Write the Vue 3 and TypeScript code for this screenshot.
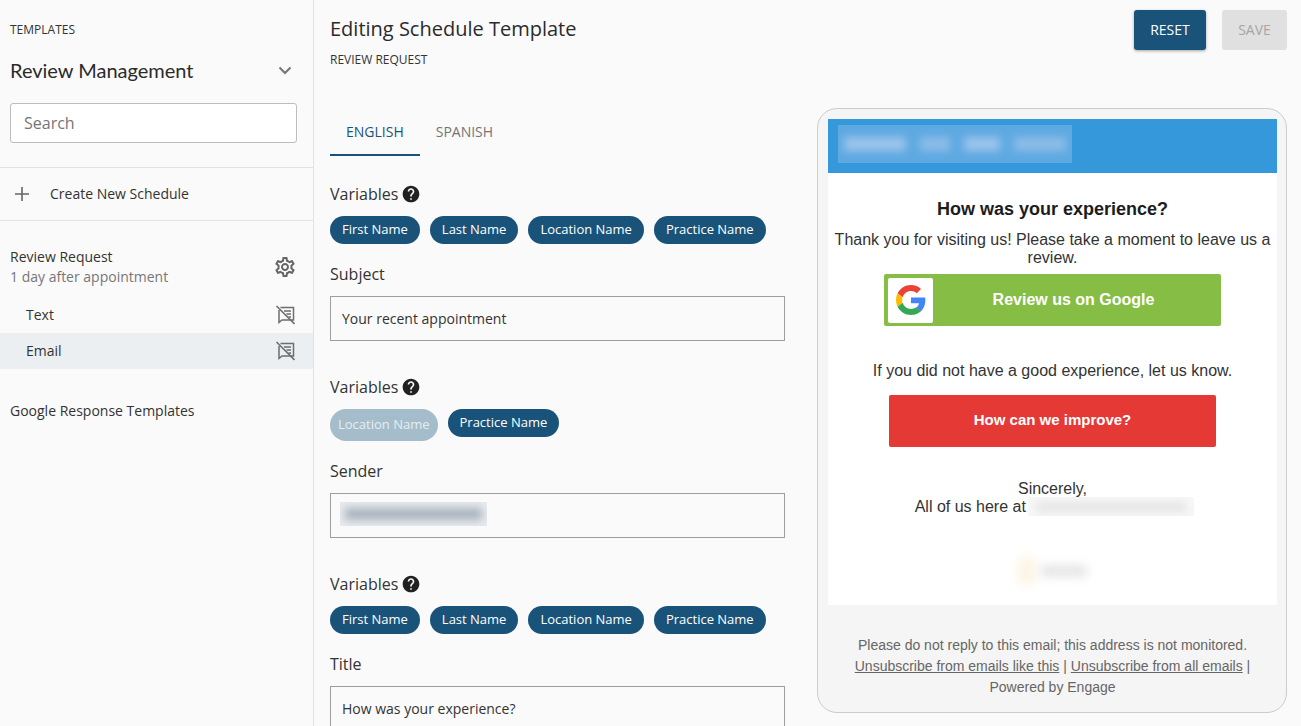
<script setup lang="ts">
import { ref } from 'vue';

type Chip = { label: string; disabled?: boolean };

const allVars: Chip[] = [
  { label: 'First Name' },
  { label: 'Last Name' },
  { label: 'Location Name' },
  { label: 'Practice Name' },
];

const fields = [
  { chips: allVars, label: 'Subject', value: 'Your recent appointment', blurred: false },
  {
    chips: [{ label: 'Location Name', disabled: true }, { label: 'Practice Name' }],
    label: 'Sender',
    value: '',
    blurred: true,
  },
  { chips: allVars, label: 'Title', value: 'How was your experience?', blurred: false },
];

const activeTab = ref('ENGLISH');
const tabs = ['ENGLISH', 'SPANISH'];
const channels = ['Text', 'Email'];
const activeChannel = ref('Email');

const helpPath =
  'M12 2C6.48 2 2 6.48 2 12s4.48 10 10 10 10-4.48 10-10S17.52 2 12 2zm1 17h-2v-2h2v2zm2.07-7.75l-.9.92C13.45 12.9 13 13.5 13 15h-2v-.5c0-1.1.45-2.1 1.17-2.83l1.24-1.26c.37-.36.59-.86.59-1.41 0-1.1-.9-2-2-2s-2 .9-2 2H8c0-2.21 1.79-4 4-4s4 1.79 4 4c0 .88-.36 1.68-.93 2.25z';
const gearPath =
  'M19.43 12.98c.04-.32.07-.64.07-.98 0-.34-.03-.66-.07-.98l2.11-1.65c.19-.15.24-.42.12-.64l-2-3.46c-.09-.16-.26-.25-.44-.25-.06 0-.12.01-.17.03l-2.49 1c-.52-.4-1.08-.73-1.69-.98l-.38-2.65C14.46 2.18 14.25 2 14 2h-4c-.25 0-.46.18-.49.42l-.38 2.65c-.61.25-1.17.59-1.69.98l-2.49-1c-.06-.02-.12-.03-.18-.03-.17 0-.34.09-.43.25l-2 3.46c-.13.22-.07.49.12.64l2.11 1.65c-.04.32-.07.65-.07.98 0 .33.03.66.07.98l-2.11 1.65c-.19.15-.24.42-.12.64l2 3.46c.09.16.26.25.44.25.06 0 .12-.01.17-.03l2.49-1c.52.4 1.08.73 1.69.98l.38 2.65c.03.24.24.42.49.42h4c.25 0 .46-.18.49-.42l.38-2.65c.61-.25 1.17-.59 1.69-.98l2.49 1c.06.02.12.03.18.03.17 0 .34-.09.43-.25l2-3.46c.12-.22.07-.49-.12-.64l-2.11-1.65zm-1.98-1.71c.04.31.05.52.05.73 0 .21-.02.43-.05.73l-.14 1.13.89.7 1.08.84-.7 1.21-1.27-.51-1.04-.42-.9.68c-.43.32-.84.56-1.25.73l-1.06.43-.16 1.13-.2 1.35h-1.4l-.19-1.35-.16-1.13-1.06-.43c-.43-.18-.83-.41-1.23-.71l-.91-.7-1.06.43-1.27.51-.7-1.21 1.08-.84.89-.7-.14-1.13c-.03-.31-.05-.54-.05-.74s.02-.43.05-.73l.14-1.13-.89-.7-1.08-.84.7-1.21 1.27.51 1.04.42.9-.68c.43-.32.84-.56 1.25-.73l1.06-.43.16-1.13.2-1.35h1.39l.19 1.35.16 1.13 1.06.43c.43.18.83.41 1.23.71l.91.7 1.06-.43 1.27-.51.7 1.21-1.07.85-.89.7.14 1.13zM12 8c-2.21 0-4 1.79-4 4s1.79 4 4 4 4-1.79 4-4-1.79-4-4-4zm0 6c-1.1 0-2-.9-2-2s.9-2 2-2 2 .9 2 2-.9 2-2 2z';
</script>

<template>
  <div class="app">
    <aside class="sidebar">
      <div class="side-top">
        <div class="eyebrow">TEMPLATES</div>
        <div class="picker">
          <span class="picker-name">Review Management</span>
          <svg class="chevron" width="14" height="9" viewBox="0 0 14 9">
            <path d="M1.5 1.5L7 7l5.5-5.5" fill="none" stroke="#757575" stroke-width="2" />
          </svg>
        </div>
        <input class="search" type="text" placeholder="Search" />
      </div>

      <div class="create-row">
        <svg width="16" height="16" viewBox="0 0 16 16">
          <path d="M8 1v14M1 8h14" stroke="#666" stroke-width="1.6" fill="none" />
        </svg>
        <span>Create New Schedule</span>
      </div>

      <div class="schedule">
        <div class="schedule-text">
          <div class="schedule-name">Review Request</div>
          <div class="schedule-when">1 day after appointment</div>
        </div>
        <svg class="gear" width="24" height="24" viewBox="0 0 24 24">
          <path :d="gearPath" fill="#666" />
        </svg>
      </div>

      <div
        v-for="c in channels"
        :key="c"
        :class="['channel', { active: c === activeChannel }]"
      >
        <span>{{ c }}</span>
        <svg width="20" height="20" viewBox="0 0 20 20">
          <path
            d="M5.5 2.5h13v12.5H7l-3 2.5V5"
            fill="none"
            stroke="#6e6e6e"
            stroke-width="1.5"
          />
          <path d="M9 6h7M11.5 9H16M13.5 12H16" stroke="#6e6e6e" stroke-width="1.3" fill="none" />
          <path d="M1.5 1l18 18" stroke="#6e6e6e" stroke-width="1.6" fill="none" />
        </svg>
      </div>

      <div class="google-link">Google Response Templates</div>
    </aside>

    <main class="main">
      <header class="head">
        <div>
          <h1 class="title">Editing Schedule Template</h1>
          <div class="eyebrow sub">REVIEW REQUEST</div>
        </div>
        <div class="actions">
          <button class="btn primary">RESET</button>
          <button class="btn disabled">SAVE</button>
        </div>
      </header>

      <div class="body">
        <section class="form">
          <div class="tabs">
            <div
              v-for="t in tabs"
              :key="t"
              :class="['tab', { active: t === activeTab }]"
            >{{ t }}</div>
          </div>

          <div v-for="f in fields" :key="f.label" class="field">
            <div class="label">
              Variables
              <svg width="20" height="20" viewBox="0 0 24 24">
                <path :d="helpPath" fill="#212121" />
              </svg>
            </div>
            <div class="chips">
              <span
                v-for="chip in f.chips"
                :key="chip.label"
                :class="['chip', { off: chip.disabled }]"
              >{{ chip.label }}</span>
            </div>
            <div class="label below">{{ f.label }}</div>
            <div class="box">
              <span v-if="f.blurred" class="smudge sender"><i></i></span>
              <template v-else>{{ f.value }}</template>
            </div>
          </div>
        </section>

        <section class="preview">
          <div class="mail">
            <div class="mail-head">
              <span class="smudge brand"><i></i></span>
            </div>
            <div class="mail-title">How was your experience?</div>
            <p class="mail-text first">
              Thank you for visiting us! Please take a moment to leave us a review.
            </p>
            <div class="cta green">
              <span class="g-box">
                <svg width="30" height="30" viewBox="0 0 48 48">
                  <path fill="#EA4335" d="M24 9.5c3.54 0 6.71 1.22 9.21 3.6l6.85-6.85C35.9 2.38 30.47 0 24 0 14.62 0 6.51 5.38 2.56 13.22l7.98 6.19C12.43 13.72 17.74 9.5 24 9.5z" />
                  <path fill="#4285F4" d="M46.98 24.55c0-1.57-.15-3.09-.38-4.55H24v9.02h12.94c-.58 2.96-2.26 5.48-4.78 7.18l7.73 6c4.51-4.18 7.09-10.36 7.09-17.65z" />
                  <path fill="#FBBC05" d="M10.53 28.59c-.48-1.45-.76-2.99-.76-4.59s.27-3.14.76-4.59l-7.98-6.19C.92 16.46 0 20.12 0 24c0 3.88.92 7.54 2.56 10.78l7.97-6.19z" />
                  <path fill="#34A853" d="M24 48c6.48 0 11.93-2.13 15.89-5.81l-7.73-6c-2.15 1.45-4.92 2.3-8.16 2.3-6.26 0-11.57-4.22-13.47-9.91l-7.98 6.19C6.51 42.62 14.62 48 24 48z" />
                </svg>
              </span>
              <span class="cta-label">Review us on Google</span>
            </div>
            <p class="mail-text bad">If you did not have a good experience, let us know.</p>
            <div class="cta red">How can we improve?</div>
            <p class="mail-text signoff">
              Sincerely,<br />
              All of us here at <span class="smudge practice"><i></i></span>
            </p>
            <div class="logo">
              <span class="logo-mark"></span>
              <span class="logo-word"></span>
            </div>
          </div>
          <footer class="mail-foot">
            Please do not reply to this email; this address is not monitored.<br />
            <u>Unsubscribe from emails like this</u> | <u>Unsubscribe from all emails</u> |<br />
            Powered by Engage
          </footer>
        </section>
      </div>
    </main>
  </div>
</template>

<style scoped>
.app {
  display: flex;
  height: 726px;
  overflow: hidden;
  font-family: 'Open Sans', 'Liberation Sans', sans-serif;
  color: #333;
  background: #fafafa;
}

.sidebar {
  flex: 0 0 314px;
  box-sizing: border-box;
  border-right: 1px solid #e2e2e2;
}

.side-top {
  padding: 22px 16px 24px 10px;
}

.eyebrow {
  font-size: 12px;
  line-height: 16px;
  color: #333;
}

.picker {
  display: flex;
  justify-content: space-between;
  align-items: center;
  margin-top: 15px;
  height: 34px;
  padding-right: 5px;
}

.picker-name {
  font-family: Lato, 'Liberation Sans', sans-serif;
  font-size: 20px;
  color: #2b2b2b;
}

.search {
  display: block;
  box-sizing: border-box;
  width: 287px;
  height: 40px;
  margin-top: 16px;
  padding: 0 13px;
  border: 1px solid #bdbdbd;
  border-radius: 3px;
  background: #fff;
  font-family: inherit;
  font-size: 16px;
  outline: none;
}

.search::placeholder {
  color: #757575;
  opacity: 1;
}

.create-row {
  display: flex;
  align-items: center;
  gap: 20px;
  height: 52px;
  padding-left: 14px;
  border-top: 1px solid #e2e2e2;
  border-bottom: 1px solid #e2e2e2;
  font-size: 14px;
}

.create-row span,
.channel span {
  margin-bottom: 2px;
}

.schedule {
  display: flex;
  justify-content: space-between;
  align-items: center;
  padding: 26px 16px 10px 10px;
}

.schedule-name {
  font-size: 14px;
  line-height: 20px;
}

.schedule-when {
  font-size: 14px;
  line-height: 20px;
  color: #777;
}

.channel {
  display: flex;
  justify-content: space-between;
  align-items: center;
  height: 36px;
  padding: 0 18px 0 26px;
  font-size: 14px;
}

.channel.active {
  background: #ebeff2;
}

.google-link {
  margin-top: 32px;
  padding-left: 10px;
  font-size: 14px;
  line-height: 20px;
}

.main {
  flex: 1;
  padding-left: 16px;
  min-width: 0;
}

.head {
  display: flex;
  justify-content: space-between;
  height: 108px;
  padding-right: 14px;
}

.title {
  margin: 15px 0 0;
  font-size: 20px;
  line-height: 28px;
  font-weight: 400;
  color: #2b2b2b;
}

.sub {
  margin-top: 9px;
}

.actions {
  display: flex;
  gap: 16px;
  margin-top: 10px;
  align-items: flex-start;
}

.btn {
  height: 40px;
  padding: 0 0 2px;
  border: none;
  border-radius: 3px;
  font-family: inherit;
  font-size: 14px;
}

.btn.primary {
  width: 72px;
  background: #1a5379;
  color: #fff;
  box-shadow: 0 1px 3px rgba(0, 0, 0, 0.35);
}

.btn.disabled {
  width: 65px;
  background: #e0e0e0;
  color: #a6a6a6;
}

.body {
  display: grid;
  grid-template-columns: 455px 470px;
  gap: 32px;
  align-items: start;
}

.tabs {
  display: flex;
  height: 48px;
}

.tab {
  box-sizing: border-box;
  height: 48px;
  padding: 0 16px;
  line-height: 48px;
  font-size: 14px;
  color: #757575;
}

.tab.active {
  color: #1a5379;
  border-bottom: 2px solid #1a5379;
}

.field {
  margin-top: 34px;
}

.tabs + .field {
  margin-top: 26px;
}

.label {
  display: flex;
  align-items: center;
  gap: 3px;
  font-size: 16px;
  line-height: 24px;
  color: #333;
}

.label.below {
  margin-top: 18px;
}

.chips {
  display: flex;
  align-items: flex-start;
  gap: 10px;
  margin-top: 10px;
}

.chip {
  height: 28px;
  padding: 0 12px;
  border-radius: 14px;
  background: #1a5379;
  color: #fff;
  font-size: 13px;
  line-height: 27px;
}

.chip.off {
  height: 32px;
  padding: 0 8px;
  border-radius: 16px;
  background: #a5bdcb;
  color: #e6edf1;
  line-height: 31px;
}

.box {
  box-sizing: border-box;
  display: flex;
  align-items: center;
  height: 45px;
  margin-top: 10px;
  padding: 0 11px;
  border: 1px solid #9e9e9e;
  font-size: 14px;
  color: #333;
}

.smudge {
  display: inline-block;
  overflow: hidden;
  vertical-align: middle;
}

.smudge i {
  display: block;
  filter: blur(4px);
}

.sender {
  width: 147px;
  height: 24px;
  margin: 0 0 3px -2px;
  background: #e8ebee;
}

.sender i {
  height: 12px;
  margin: 6px 5px 0;
  background: #a8b2bc;
}

.preview {
  box-sizing: border-box;
  width: 470px;
  height: 605px;
  padding: 10px 9px 0 10px;
  border: 1px solid #cbcbcb;
  border-radius: 20px;
  background: #f5f5f5;
}

.mail {
  height: 486px;
  overflow: hidden;
  background: #fff;
  font-family: 'Liberation Sans', Arial, sans-serif;
  color: #333;
}

.mail-head {
  box-sizing: border-box;
  height: 54px;
  padding: 6px 10px;
  background: #3498db;
}

.brand {
  display: block;
  width: 234px;
  height: 38px;
  background: #5ea9e2;
}

/* four blurred words, the practice name is hidden in the reference */
.brand i {
  height: 14px;
  margin: 12px 6px 0;
  background: linear-gradient(
    90deg,
    #9cc4ea 0 62px,
    transparent 62px 76px,
    #8dbde8 76px 106px,
    transparent 106px 120px,
    #9cc4ea 120px 156px,
    transparent 156px 170px,
    #8dbde8 170px
  );
}

.mail-title {
  margin-top: 27px;
  text-align: center;
  font-size: 18px;
  line-height: 18px;
  font-weight: 700;
  color: #1c1c1c;
}

.mail-text {
  margin: 0;
  text-align: center;
  font-size: 16px;
  line-height: 18px;
}

.mail-text.first {
  margin-top: 13px;
}

.mail-text.bad {
  margin-top: 36px;
}

.mail-text.signoff {
  margin-top: 33px;
}

.cta {
  display: flex;
  align-items: center;
  height: 52px;
  border-radius: 2px;
  color: #fff;
  font-weight: 700;
}

.green {
  width: 337px;
  margin: 7px 0 0 56px;
  background: #86bd45;
  font-size: 16px;
}

.g-box {
  display: flex;
  align-items: center;
  justify-content: center;
  width: 45px;
  height: 45px;
  margin-left: 4px;
  border-radius: 2px;
  background: #fff;
}

.cta-label {
  flex: 1;
  margin-right: 7px;
  text-align: center;
}

.red {
  justify-content: center;
  box-sizing: border-box;
  width: 327px;
  margin: 15px 0 0 61px;
  padding-bottom: 4px;
  background: #e53935;
  font-size: 15px;
}

.practice {
  width: 166px;
  height: 19px;
  margin: -2px -4px 0 -2px;
  background: #f7f7f7;
}

.practice i {
  height: 8px;
  margin: 6px 8px 0;
  background: #e2e2e2;
}

.logo {
  display: flex;
  align-items: center;
  justify-content: center;
  gap: 4px;
  margin-top: 39px;
  padding-right: 2px;
}

.logo-mark {
  width: 20px;
  height: 32px;
  border-radius: 50%;
  background: #fdf5e6;
  filter: blur(5px);
}

.logo-word {
  width: 46px;
  height: 12px;
  background: #e6e6e6;
  filter: blur(5px);
}

.mail-foot {
  padding-top: 30px;
  text-align: center;
  font-family: 'Liberation Sans', Arial, sans-serif;
  font-size: 14px;
  line-height: 21px;
  color: #666;
}
</style>

<style>
body {
  margin: 0;
  background: #fafafa;
}
</style>
